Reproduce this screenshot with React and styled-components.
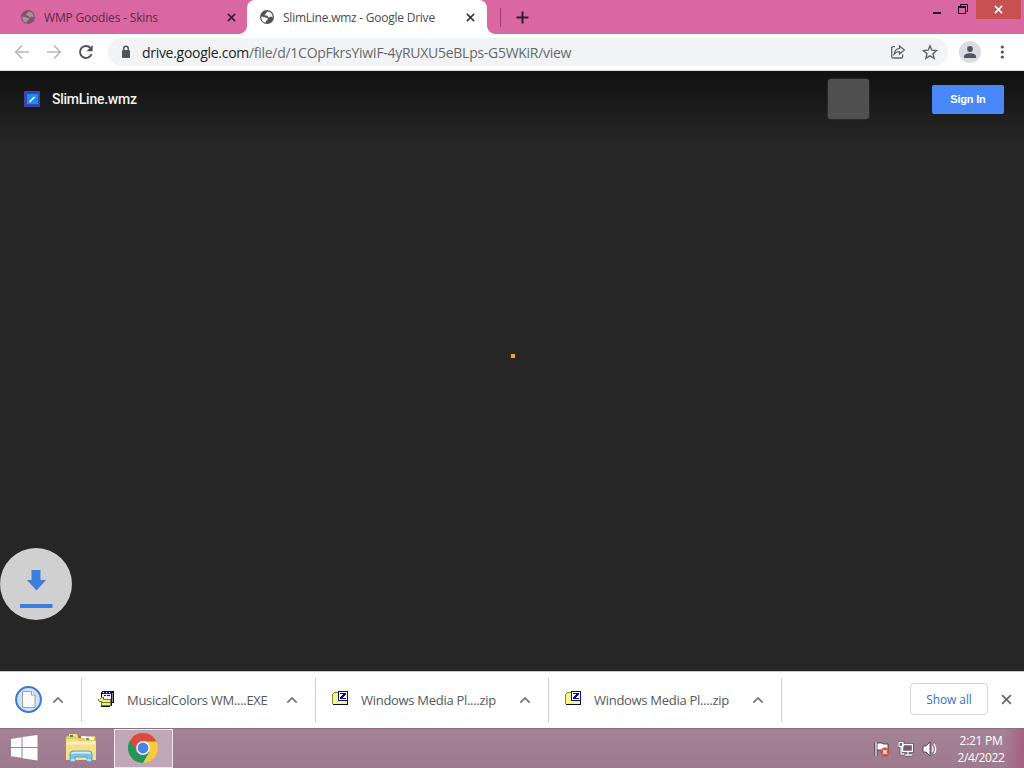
import React from 'react'
import styled, { createGlobalStyle } from 'styled-components'

const GlobalStyle = createGlobalStyle`
  * {
    box-sizing: border-box;
  }

  body {
    margin: 0;
    overflow: hidden;
    font-family: "Open Sans", "Noto Sans", sans-serif;
  }

  button {
    padding: 0;
    border: none;
    background: none;
    font-family: inherit;
  }

  svg {
    display: block;
    flex: none;
  }
`

const Screen = styled.div`
  width: 1024px;
  height: 768px;
  display: flex;
  flex-direction: column;
  overflow: hidden;
  background: #262626;
`

const Text = styled.span`
  font-size: ${props => props.$size || 12}px;
  font-weight: ${props => props.$weight || 400};
  color: ${props => props.$color || '#3c4043'};
  letter-spacing: ${props => props.$spacing || 0}px;
  white-space: nowrap;
`

const TabStrip = styled.div`
  height: 34px;
  flex: none;
  display: flex;
  background: #d968a2;
`

const Tab = styled.div`
  position: relative;
  width: ${props => props.$width}px;
  height: 34px;
  display: flex;
  align-items: center;
  padding: 0 ${props => props.$right}px 0 ${props => props.$left}px;
  border-radius: ${props => props.$active ? '8px 8px 0 0' : '0'};
  background: ${props => props.$active ? '#fff' : 'transparent'};

  &::before, &::after {
    content: '';
    display: ${props => props.$active ? 'block' : 'none'};
    position: absolute;
    bottom: 0;
    width: 8px;
    height: 8px;
  }

  &::before {
    left: -8px;
    background: radial-gradient(circle at 0 0, #d968a2 7.5px, #fff 8px);
  }

  &::after {
    right: -8px;
    background: radial-gradient(circle at 100% 0, #d968a2 7.5px, #fff 8px);
  }
`

const TabTitle = styled(Text)`
  flex: 1;
  margin-left: 8px;
`

const NewTab = styled.button`
  display: flex;
  align-items: center;
  gap: 15px;
  margin-left: 13px;
`

const TabDivider = styled.i`
  width: 1px;
  height: 19px;
  background: #9c3f70;
`

const WindowButtons = styled.div`
  display: flex;
  align-items: flex-start;
  margin-left: auto;
  padding-right: 3px;
`

const WindowButton = styled.button`
  width: ${props => props.$width}px;
  height: 19px;
  display: flex;
  align-items: center;
  justify-content: center;
  background: ${props => props.$close ? '#c75050' : 'transparent'};
`

const Toolbar = styled.div`
  height: 37px;
  flex: none;
  display: flex;
  align-items: center;
  padding: 0 14px;
  background: #fff;
  border-bottom: 1px solid #d9dadc;
`

const NavButtons = styled.div`
  display: flex;
  gap: 16px;
  width: 94px;
`

const AddressBar = styled.div`
  width: 841px;
  height: 28px;
  display: flex;
  align-items: center;
  padding: 0 10px;
  border-radius: 14px;
  background: #f1f3f4;
`

const Url = styled(Text)`
  flex: 1;
  margin-left: 8px;

  b {
    font-weight: 400;
    color: #202124;
  }
`

const AddressIcons = styled.div`
  display: flex;
  gap: 16px;
`

const Avatar = styled.div`
  width: 22px;
  height: 22px;
  margin-left: 11px;
  display: flex;
  justify-content: center;
  align-items: center;
  border-radius: 50%;
  background: #dadce0;
`

const MenuButton = styled.button`
  width: 16px;
  margin-left: 13px;
`

const Viewer = styled.main`
  position: relative;
  height: 600px;
  flex: none;
  background: #262626;
`

const ViewerHeader = styled.header`
  height: 72px;
  display: flex;
  align-items: center;
  padding: 0 20px 16px 24px;
  background: linear-gradient(#111 0%, #131313 15%, #262626 100%);
`

const FileName = styled(Text)`
  flex: 1;
  margin-left: 12px;
  padding-bottom: 1px;
  font-family: Roboto, sans-serif;
`

const AppsTile = styled.div`
  width: 41px;
  height: 40px;
  margin-right: 63px;
  border-radius: 3px;
  background: #505050;
  box-shadow: 0 0 2px #505050;
`

const SignIn = styled.button`
  width: 72px;
  height: 29px;
  border-radius: 2px;
  background: #4787f7;
  color: #fff;
  font: bold 11px "Liberation Sans", sans-serif;
  letter-spacing: -0.2px;
`

const LoadingDot = styled.i`
  position: absolute;
  left: 511px;
  top: 283px;
  width: 4px;
  height: 4px;
  background: #dfa63c;
  box-shadow: 0 0 1px 1px #3d2509;
`

const DownloadBubble = styled.div`
  position: absolute;
  left: 0;
  top: 477px;
  width: 72px;
  height: 72px;
  border-radius: 50%;
  background: #d0d0d0;
`

const Shelf = styled.div`
  height: 57px;
  flex: none;
  display: flex;
  align-items: center;
  padding-right: 12px;
  background: #fff;
  border-top: 1px solid #c9c9cb;
`

const ShelfItem = styled.div`
  width: ${props => props.$width}px;
  height: 44px;
  display: flex;
  align-items: center;
  padding: 0 17px 0 ${props => props.$left || 16}px;
  border-right: 1px solid #cfcfd1;
`

const FileIcon = styled.div`
  padding-bottom: ${props => props.$lift || 2}px;
  margin-right: ${props => props.$gap || 0}px;
`

const ShelfName = styled(Text)`
  flex: 1;
  margin-left: 12px;
`

const ShowAll = styled.button`
  width: 78px;
  height: 32px;
  margin: 0 13px 2px auto;
  border: 1px solid #d3d6db;
  border-radius: 4px;
`

const CloseShelf = styled.button`
  padding-bottom: 2px;
`

const Taskbar = styled.footer`
  height: 40px;
  flex: none;
  display: flex;
  align-items: center;
  padding-left: 10px;
  border-top: 1px solid #8b7081;
  background: linear-gradient(90deg, transparent 98%, #a85f82), linear-gradient(#a58396, #9d7a8d);
`

const TaskIcon = styled.div`
  padding-bottom: 1px;
  margin-right: ${props => props.$gap}px;
`

const TaskButton = styled.button`
  width: 59px;
  height: 39px;
  display: flex;
  align-items: center;
  justify-content: center;
  padding: 0 2px 2px 0;
  border: 1px solid #f0e7ed;
  background: #bfa7b5;
`

const Tray = styled.div`
  display: flex;
  gap: 8px;
  margin: 0 18px 0 auto;
`

const Clock = styled.div`
  width: 50px;
  display: flex;
  flex-direction: column;
  align-items: center;
  margin-right: 18px;
  line-height: 17px;
`

function Globe({ color, opacity = 1 }) {
  return (
    <svg width="16" height="16" viewBox="0 0 16 16">
      <circle cx="8" cy="8" r="7" fill={color} />
      <path d="M2.4 7.4 6.6 8.6 8.7 9.3 8.5 11.3 7 11.8 6.7 13.6C3.8 13.1 2 10.7 2.4 7.4ZM8.5 2.4c-.2 1.2-1.9 1-1.7 2.2.1 1-1 .7-1.1 1.7.8.8 2-.3 2.8.5.5.7.2 1.6 1.3 1.7 1.2 0 1.2-1 2.3-1 .9 0 .6.9 1.5.9.4-3-1.6-5.8-5.1-6Z" fill="#fff" fillOpacity={opacity} />
    </svg>
  )
}

function Cross({ size = 9, color = '#333', width = 1.7 }) {
  return (
    <svg width={size} height={size} viewBox="0 0 10 10">
      <path d="M1 1l8 8M9 1L1 9" stroke={color} strokeWidth={width} />
    </svg>
  )
}

function Chevron() {
  return (
    <svg width="12" height="8" viewBox="0 0 12 8">
      <path d="M1.3 6.7L6 2l4.7 4.7" fill="none" stroke="#737578" strokeWidth="1.7" />
    </svg>
  )
}

function NavIcons() {
  return (
    <NavButtons>
      <svg width="16" height="16" viewBox="0 0 16 16" fill="none" stroke="#b7b9bc" strokeWidth="1.7">
        <path d="M15 8H2M8 1.5L1.7 8 8 14.5" />
      </svg>
      <svg width="16" height="16" viewBox="0 0 16 16" fill="none" stroke="#b7b9bc" strokeWidth="1.7">
        <path d="M1 8h13M8 1.5L14.3 8 8 14.5" />
      </svg>
      <svg width="16" height="16" viewBox="0 0 16 16">
        <path d="M13.6 10.2A6 6 0 1 1 12.5 4" fill="none" stroke="#505357" strokeWidth="1.9" />
        <path d="M14.7 1v6.2H8.5z" fill="#505357" />
      </svg>
    </NavButtons>
  )
}

function MusicIcon() {
  return (
    <svg width="17" height="17" viewBox="0 0 17 17" shapeRendering="crispEdges">
      <path d="M4 0h12v12h-2v1H5V8H3V1h1z" fill="#111" />
      <path d="M4 1h10v2H4z" fill="#15158a" />
      <path d="M4 3h9v6H4z" fill="#f1f1f6" />
      <path d="M5 1h1v1H5zM8 1h1v1H8zM11 1h1v1h-1z" fill="#fff" />
      <path d="M6 4h2v1H6zM9 4h3v1H9z" fill="#15158a" />
      <path d="M14 2h1v9h-1z" fill="#8a8a92" />
      <path d="M0 8h2V7h1V6h3v2h7v7H3v-4H1v-1H0z" fill="#777a1c" />
      <path d="M1 8h2V7h2v2h7v2H4v-1H1zM4 12h8v2H4z" fill="#f0ee86" />
      <path d="M3 15h9v1H3zM13 10h1v5h-1z" fill="#111" />
    </svg>
  )
}

function ZipIcon() {
  return (
    <svg width="17" height="16" viewBox="0 0 17 16" shapeRendering="crispEdges">
      <path d="M1 3h1V2h4v1h9v11H1z" fill="#f5f88b" />
      <path d="M0 4h1v10H0zM1 3h1v1H1zM2 2h4v1H2z" fill="#85872b" />
      <path d="M1 14h14v1H1zM15 11h1v4h-1z" fill="#111" />
      <path d="M6 1h10v10H6z" fill="#10108c" />
      <path d="M7 2h8v8H7z" fill="#fff" />
      <path d="M8 3h6v2h-1v1h-1v1h-1v1h3v1H8V7h1V6h1V5h1V4H8z" fill="#10108c" />
    </svg>
  )
}

function FolderIcon() {
  return (
    <svg width="32" height="30" viewBox="0 0 32 30">
      <path d="M1 4.5Q1 3 2.5 3H4V1h8l1 2h16q1.5 0 1.5 1.5V26H1z" fill="#e8c868" />
      <path d="M4 1.3h7l1 2H4z" fill="#f6e6a0" />
      <path d="M5 2h3v2H5z" fill="#269c3d" />
      <path d="M12 3h9v2h-9zM20 4h9v3h-9z" fill="#fff" />
      <path d="M13 3h3v2h-3z" fill="#d45531" />
      <path d="M21 5h3v2h-3z" fill="#3d9bd8" />
      <path d="M1 6h11l2 2h17v19H1z" fill="#f5df88" />
      <path d="M2 10h28" stroke="#fbefb5" strokeWidth="3" />
      <path d="M5 29v-8q0-3 3-3h16q3 0 3 3v8h-5v-5H10v5z" fill="#79c3e5" stroke="#4b9dca" strokeWidth=".8" />
      <path d="M7 21q0-1.4 2-1.4h14q2 0 2 1.4" fill="none" stroke="#d5f1fb" strokeWidth="1.6" />
      <path d="M6 27h4M22 27h4" stroke="#c7ebfa" strokeWidth="1.5" />
    </svg>
  )
}

function ChromeLogo() {
  return (
    <svg width="30" height="30" viewBox="0 0 30 30">
      <circle cx="15" cy="15" r="15" fill="#fbca3f" />
      <path d="M15 15 2 7.5A15 15 0 0 0 15 30l6.5-11.3z" fill="#23945b" />
      <path d="M2 7.5A15 15 0 0 1 28 7.5L28.5 8.5H15L8.8 18.5z" fill="#d94b3d" />
      <circle cx="15" cy="15" r="6.9" fill="#f5f5f5" />
      <circle cx="15" cy="15" r="5.4" fill="#4486e8" />
    </svg>
  )
}

const zips = [1, 2]

function App() {
  return (
    <Screen>
      <GlobalStyle />
      <TabStrip>
        <Tab $width={247} $left={20} $right={11}>
          <Globe color="#80536f" opacity={0.34} />
          <TabTitle $color="#5b2947" $spacing={-0.18}>WMP Goodies - Skins</TabTitle>
          <Cross color="#361a35" />
        </Tab>
        <Tab $active $width={240} $left={12} $right={12}>
          <Globe color="#4f5256" />
          <TabTitle $color="#494c50" $spacing={-0.24}>SlimLine.wmz - Google Drive</TabTitle>
          <Cross />
        </Tab>
        <NewTab>
          <TabDivider />
          <svg width="13" height="13" viewBox="0 0 13 13">
            <path d="M6.5 .5v12M.5 6.5h12" stroke="#351b31" strokeWidth="2" />
          </svg>
        </NewTab>
        <WindowButtons>
          <WindowButton $width={26}>
            <svg width="8" height="14" viewBox="0 0 8 14"><path d="M0 10h8" stroke="#2b102a" strokeWidth="2" /></svg>
          </WindowButton>
          <WindowButton $width={26}>
            <svg width="10" height="11" viewBox="0 0 10 11" fill="none" stroke="#2b102a" shapeRendering="crispEdges">
              <path d="M.5 2.5h7v7h-7zM2.5 2V.5h7v7H8M0 3h8" />
            </svg>
          </WindowButton>
          <WindowButton $close $width={45}><Cross color="#fff" /></WindowButton>
        </WindowButtons>
      </TabStrip>

      <Toolbar>
        <NavIcons />
        <AddressBar>
          <svg width="16" height="16" viewBox="0 0 16 16">
            <rect x="4" y="6" width="8" height="8" rx="1" fill="#515458" />
            <path d="M5.7 6V4.5a2.3 2.3 0 0 1 4.6 0V6" fill="none" stroke="#515458" strokeWidth="1.4" />
          </svg>
          <Url $size={14} $color="#66696d" $spacing={-0.28}><b>drive.google.com</b>/file/d/1COpFkrsYiwIF-4yRUXU5eBLps-G5WKiR/view</Url>
          <AddressIcons>
            <svg width="16" height="16" viewBox="0 0 16 16" fill="none" stroke="#5f6368" strokeWidth="1.3">
              <path d="M5 2.7H3.2Q1.7 2.7 1.7 4.2v8.3q0 1.5 1.5 1.5h8q1.5 0 1.5-1.5v-2" />
              <path d="M9.5 2l4.8 4-4.8 4V7.6Q6 7.6 4.2 10q.5-5 5.3-5.6z" />
            </svg>
            <svg width="16" height="16" viewBox="0 0 16 16" fill="none" stroke="#5f6368" strokeWidth="1.4">
              <path d="M8 1.8l1.8 4.4 4.8.4-3.6 3.1 1.1 4.7L8 11.9l-4.1 2.5L5 9.7 1.4 6.6l4.8-.4z" />
            </svg>
          </AddressIcons>
        </AddressBar>
        <Avatar>
          <svg width="12" height="12" viewBox="0 0 12 12" fill="#50565f">
            <circle cx="6" cy="3" r="2.9" />
            <path d="M0 12v-1.6C0 8.3 3 7.2 6 7.2s6 1.1 6 3.2V12z" />
          </svg>
        </Avatar>
        <MenuButton>
          <svg width="16" height="16" viewBox="0 0 16 16" fill="#515458">
            <circle cx="8.3" cy="3" r="1.6" /><circle cx="8.3" cy="8" r="1.6" /><circle cx="8.3" cy="13" r="1.6" />
          </svg>
        </MenuButton>
      </Toolbar>

      <Viewer>
        <ViewerHeader>
          <svg width="16" height="16" viewBox="0 0 16 16">
            <rect width="16" height="16" rx="1" fill="#3846ad" />
            <rect x="3" y="3" width="11" height="10" fill="#1c8df0" />
            <path d="M5.5 11l5-5" stroke="#fff" strokeWidth="1.6" />
          </svg>
          <FileName $size={14} $weight={500} $color="#f3f3f3" $spacing={-0.25}>SlimLine.wmz</FileName>
          <AppsTile />
          <SignIn>Sign In</SignIn>
        </ViewerHeader>
        <LoadingDot />
        <DownloadBubble>
          <svg width="72" height="72" viewBox="0 0 72 72" fill="#3d7edb">
            <path d="M31.5 22h9v10h5.5L36.5 42.5 27 32h4.5zM20 56h32.5v4H20z" />
          </svg>
        </DownloadBubble>
      </Viewer>

      <Shelf>
        <ShelfItem $width={82} $left={15}>
          <FileIcon $gap={10}>
            <svg width="27" height="27" viewBox="0 0 27 27">
              <circle cx="13.5" cy="13.5" r="12.4" fill="#cfe2f8" stroke="#3f78cb" strokeWidth="2" />
              <path d="M7.5 5.5h9l3.5 3.6v12.4H7.5z" fill="#fafafa" stroke="#a1a1a1" />
              <path d="M16.5 5.5v3.6H20" fill="#fff" stroke="#a1a1a1" />
            </svg>
          </FileIcon>
          <Chevron />
        </ShelfItem>
        <ShelfItem $width={234}>
          <FileIcon><MusicIcon /></FileIcon>
          <ShelfName $size={13} $color="#55585c" $spacing={-0.29}>MusicalColors WM....EXE</ShelfName>
          <Chevron />
        </ShelfItem>
        {zips.map(zip => (
          <ShelfItem key={zip} $width={233}>
            <FileIcon $lift={4}><ZipIcon /></FileIcon>
            <ShelfName $size={13} $color="#55585c" $spacing={-0.29}>Windows Media Pl....zip</ShelfName>
            <Chevron />
          </ShelfItem>
        ))}
        <ShowAll><Text $color="#3e6fb8" $weight={500} $spacing={-0.1}>Show all</Text></ShowAll>
        <CloseShelf><Cross size={11} color="#66696c" width={1.6} /></CloseShelf>
      </Shelf>

      <Taskbar>
        <TaskIcon $gap={27}>
          <svg width="28" height="26" viewBox="0 0 28 26" fill="#fff">
            <path d="M1 4l10.5-1.7V12H1zM12.5 2.1L27.5 0v12h-15zM1 13h10.5v9.8L1 21.2zM12.5 13h15v12.4l-15-2.2z" />
          </svg>
        </TaskIcon>
        <TaskIcon $gap={17}><FolderIcon /></TaskIcon>
        <TaskButton><ChromeLogo /></TaskButton>
        <Tray>
          <svg width="16" height="16" viewBox="0 0 16 16">
            <path d="M2 1v14" stroke="#3d2f39" strokeWidth="3" />
            <path d="M3 2h5l1 1h5v7H8L7 9H3z" fill="#fff" stroke="#3d2f39" strokeWidth=".8" />
            <path d="M2 1v14" stroke="#fff" strokeWidth="1.3" />
            <circle cx="11" cy="11" r="4.5" fill="#d6493b" />
            <path d="M9 9l4 4M13 9l-4 4" stroke="#fff" strokeWidth="1.3" />
          </svg>
          <svg width="16" height="16" viewBox="0 0 16 16">
            <path d="M4.5 3.5h10v7h-10zM7 14h7M10 10v4M1 1.5h4v4H1zM3 6v7h3" fill="none" stroke="#3d2f39" strokeWidth="2.6" />
            <path d="M4.5 3.5h10v7h-10z" fill="#725d69" />
            <path d="M4.5 3.5h10v7h-10zM7 14h7M10 10v4M1 1.5h4v4H1zM3 6v7h3" fill="none" stroke="#fff" strokeWidth="1.3" />
          </svg>
          <svg width="16" height="16" viewBox="0 0 16 16">
            <path d="M1 5h3l4-4v14l-4-4H1z" fill="#fff" stroke="#3d2f39" strokeWidth=".8" />
            <path d="M10 5q2 3 0 6M12 3q3.5 5 0 10" fill="none" stroke="#fff" strokeWidth="1.3" />
          </svg>
        </Tray>
        <Clock>
          <Text $color="#fff" $spacing={-0.3}>2:21 PM</Text>
          <Text $color="#fff" $spacing={-0.4}>2/4/2022</Text>
        </Clock>
      </Taskbar>
    </Screen>
  )
}

export default App
